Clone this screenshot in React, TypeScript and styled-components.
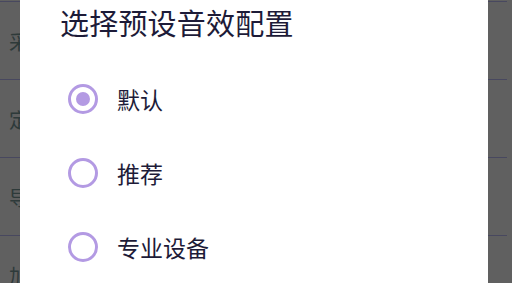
import React from "react";
import styled, { createGlobalStyle } from "styled-components";

const Global = createGlobalStyle`
  html, body { margin: 0; padding: 0; }
  body {
    width: 512px;
    height: 283px;
    overflow: hidden;
    background: #606060;
    font-family: "Noto Sans CJK SC", "Noto Sans", sans-serif;
  }
`;

const Screen = styled.div`
  position: relative;
  width: 512px;
  height: 283px;
  overflow: hidden;
  background: #606060;
`;

const SettingsList = styled.div`
  display: flex;
  flex-direction: column;
  padding-right: 5px;
  padding-top: 1px;
`;

const SettingRow = styled.div<{ $first?: boolean }>`
  height: 79px;
  display: flex;
  align-items: center;
  padding-left: 9px;
  box-sizing: border-box;
  border-top: 1px solid #48485f;
  margin-top: ${(p) => (p.$first ? "0" : "-1px")};
  font-size: 20px;
  color: #2e3a3a;
`;

const Dialog = styled.div`
  position: absolute;
  left: 20px;
  top: 0;
  width: 468px;
  height: 300px;
  background: #ffffff;
  box-sizing: border-box;
  padding: 1px 0 0 40px;
  display: flex;
  flex-direction: column;
`;

const Title = styled.div`
  font-size: 29px;
  line-height: 42px;
  color: #1d1b38;
  letter-spacing: 0.2px;
`;

const Options = styled.div`
  display: flex;
  flex-direction: column;
  margin-top: 19px;
  padding-left: 8px;
`;

const Option = styled.div`
  height: 74px;
  display: flex;
  align-items: center;
  gap: 19px;
`;

const Radio = styled.span<{ $checked?: boolean }>`
  width: 30px;
  height: 30px;
  flex: none;
  box-sizing: border-box;
  border: 3px solid #b39ae3;
  border-radius: 50%;
  display: flex;
  align-items: center;
  justify-content: center;
  &::after {
    content: "";
    display: ${(p) => (p.$checked ? "block" : "none")};
    width: 14px;
    height: 14px;
    border-radius: 50%;
    background: #b39ae3;
  }
`;

const OptionLabel = styled.span`
  font-size: 23px;
  color: #1d1b38;
`;

const rows = ["采", "定", "导", "加"];
const options = ["默认", "推荐", "专业设备"];

export default function App() {
  return (
    <Screen>
      <Global />
      <SettingsList>
        {rows.map((r, i) => (
          <SettingRow key={i} $first={i === 0}>
            {r}
          </SettingRow>
        ))}
      </SettingsList>
      <Dialog>
        <Title>选择预设音效配置</Title>
        <Options>
          {options.map((o, i) => (
            <Option key={o}>
              <Radio $checked={i === 0} />
              <OptionLabel>{o}</OptionLabel>
            </Option>
          ))}
        </Options>
      </Dialog>
    </Screen>
  );
}
